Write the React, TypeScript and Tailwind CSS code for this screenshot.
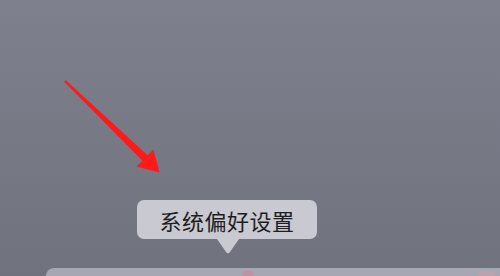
export default function App() {
  return (
    <div className="relative w-[500px] h-[276px] overflow-hidden bg-gradient-to-b from-[#7e808d] to-[#70727e] font-['Noto_Sans_CJK_SC',sans-serif]">
      {/* red annotation arrow */}
      <svg className="absolute left-0 top-0" width="500" height="276" viewBox="0 0 500 276">
        <polygon
          points="64.2,81.8 65.8,80.2 147.6,155.3 153.5,149.5 159.5,172.5 136.5,166.5 142.4,160.7"
          fill="#ff1a1a"
        />
      </svg>

      <div className="flex flex-col pt-[200px]">
        <div className="ml-[137px] w-[180px]">
          <div className="h-[39px] rounded-[7px] bg-[#c9c9d1] flex items-center justify-center text-[22px] leading-none text-[#1e1e22] tracking-[0.5px]">
            系统偏好设置
          </div>
          <svg className="ml-[80px] block" width="22" height="15" viewBox="0 0 22 15">
            <path d="M0 0 L22 0 L13 13 Q11 15.5 9 13 Z" fill="#c9c9d1" />
          </svg>
        </div>
        <div className="mt-[14px] ml-[46px] h-[20px] rounded-tl-[8px] bg-[#a7a7b3] relative">
          <div className="absolute left-[196px] top-[3px] w-[12px] h-[5px] rounded-full bg-[#c98a9a] opacity-70" />
          <div className="absolute right-[4px] top-[3px] w-[18px] h-[5px] rounded-full bg-[#c7a0aa] opacity-60" />
        </div>
      </div>
    </div>
  )
}
